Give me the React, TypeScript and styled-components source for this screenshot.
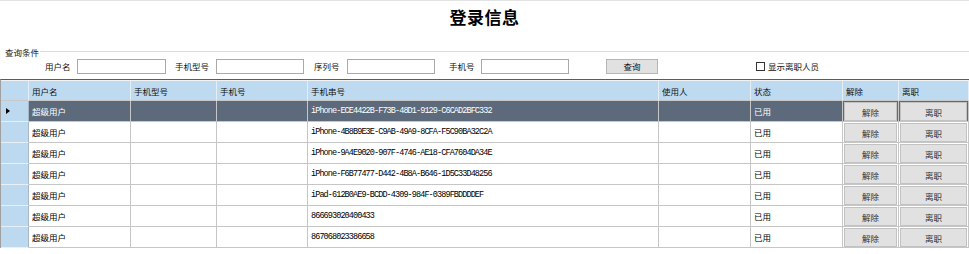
import React from "react";
import styled, { createGlobalStyle } from "styled-components";

const Global = createGlobalStyle`
  html, body { margin: 0; padding: 0; background: #fff; }
  body { font-family: "Noto Sans CJK SC", "Noto Sans", sans-serif; color: #000; }
  * { box-sizing: border-box; }
`;

const Page = styled.div`
  width: 969px;
  height: 254px;
  border-top: 1px solid #e2e2e2;
  overflow: hidden;
`;

const TitleBar = styled.div`
  height: 45px;
  display: flex;
  justify-content: center;
  padding-top: 5px;
`;

const Title = styled.h1`
  margin: 0;
  font-size: 17px;
  line-height: 22px;
  font-weight: 700;
  letter-spacing: 0.5px;
`;

const LegendRow = styled.div`
  height: 12px;
  display: flex;
  align-items: center;
  padding-left: 5px;
`;

const LegendText = styled.span`
  font-size: 8.5px;
  line-height: 12px;
  color: #222;
`;

const LegendLine = styled.div`
  flex: 1;
  height: 2px;
  border-top: 1px solid #dcdcdc;
  border-bottom: 1px solid #fff;
  margin-left: 1px;
`;

const FilterRow = styled.div`
  height: 16px;
  display: flex;
  align-items: center;
  padding-left: 45px;
`;

const Label = styled.span<{ $ml?: number; $w?: number }>`
  font-size: 8.5px;
  line-height: 12px;
  margin-left: ${(p) => p.$ml ?? 0}px;
  ${(p) => (p.$w ? `width: ${p.$w}px; flex: none;` : "")}
  white-space: nowrap;
  color: #111;
`;

const Input = styled.input<{ $w: number }>`
  width: ${(p) => p.$w}px;
  height: 15px;
  margin: 0;
  padding: 0;
  border: 1px solid #a9a9a9;
  background: #fff;
  outline: none;
  flex: none;
`;

const QueryButton = styled.button<{ $ml: number }>`
  width: 52px;
  height: 15px;
  margin-left: ${(p) => p.$ml}px;
  padding: 0;
  border: 1px solid #b5b5b5;
  background: #e1e1e1;
  font-family: inherit;
  font-size: 8.5px;
  line-height: 12px;
  color: #111;
  flex: none;
`;

const CheckBox = styled.span<{ $ml: number }>`
  width: 9px;
  height: 9px;
  margin-left: ${(p) => p.$ml}px;
  border: 1px solid #333;
  background: #fff;
  display: inline-block;
  flex: none;
`;

const TableWrap = styled.div`
  margin-top: 5px;
  border-top: 1px solid #5c5c5c;
  border-left: 1px solid #a0a0a0;
`;

const Grid = styled.table`
  width: 968px;
  border-collapse: separate;
  border-spacing: 0;
  table-layout: fixed;
  font-size: 8.5px;
`;

const HeadCell = styled.th`
  height: 21px;
  padding: 0 0 0 3px;
  text-align: left;
  vertical-align: middle;
  font-weight: 400;
  background: #bedaf0;
  border-top: 1px solid #f2f2f2;
  border-right: 1px solid #e6eef5;
  border-bottom: 1px solid #c8c8c8;
  color: #111;
  white-space: nowrap;
  overflow: hidden;
`;

const RowHeadCell = styled.td`
  height: 21px;
  background: #bdd9ef;
  border-bottom: 1px solid #e8f0f7;
  border-right: 1px solid #a7b9c8;
  padding: 0 0 0 5px;
  vertical-align: middle;
`;

const Pointer = styled.span`
  display: block;
  width: 0;
  height: 0;
  border-top: 3px solid transparent;
  border-bottom: 3px solid transparent;
  border-left: 4px solid #000;
`;

const Cell = styled.td<{ $sel: boolean; $mono?: boolean }>`
  height: 21px;
  padding: 0 0 0 3px;
  vertical-align: middle;
  border-right: 1px solid #c6c6c6;
  border-bottom: 1px solid #c6c6c6;
  background: ${(p) => (p.$sel ? "#5c6a7c" : "#fff")};
  color: ${(p) => (p.$sel ? "#fff" : "#000")};
  white-space: nowrap;
  overflow: hidden;
  font-family: ${(p) =>
    p.$mono ? '"Liberation Mono", monospace' : '"Noto Sans CJK SC", sans-serif'};
  font-size: ${(p) => (p.$mono ? "8.5px" : "8.5px")};
  letter-spacing: ${(p) => (p.$mono ? "-0.9px" : "0")};
`;

const ButtonCell = styled.td<{ $sel: boolean }>`
  height: 21px;
  padding: 1px 1px 0 1px;
  border-right: 1px solid #c6c6c6;
  border-bottom: 1px solid #c6c6c6;
  background: ${(p) => (p.$sel ? "#5c6a7c" : "#fff")};
`;

const CellButton = styled.button`
  display: block;
  width: 100%;
  height: 19px;
  margin: 0;
  padding: 0;
  border: 1px solid #c2c2c2;
  background: #e1e1e1;
  font-family: "Noto Sans CJK SC", sans-serif;
  font-size: 8.5px;
  color: #333;
`;

const columns = [
  { title: "", w: 28 },
  { title: "用户名", w: 102 },
  { title: "手机型号", w: 86 },
  { title: "手机号", w: 91 },
  { title: "手机串号", w: 351 },
  { title: "使用人", w: 92 },
  { title: "状态", w: 92 },
  { title: "解除", w: 56 },
  { title: "离职", w: 70 },
];

const serials = [
  "iPhone-ECE4422B-F73B-48D1-9129-C6CAD2BFC332",
  "iPhone-4B8B9E3E-C9AB-49A9-8CFA-F5C90BA32C2A",
  "iPhone-9A4E9020-907F-4746-AE18-CFA7604DA34E",
  "iPhone-F6B77477-D442-4B8A-B646-1D5C33D48256",
  "iPad-612B0AE9-BCDD-4309-984F-0389FBDDDDEF",
  "866693020400433",
  "867068023386658",
];

export default function App() {
  return (
    <>
      <Global />
      <Page>
        <TitleBar>
          <Title>登录信息</Title>
        </TitleBar>
        <LegendRow>
          <LegendText>查询条件</LegendText>
          <LegendLine />
        </LegendRow>
        <FilterRow>
          <Label $w={32}>用户名</Label>
          <Input $w={89} />
          <Label $ml={9} $w={41}>手机型号</Label>
          <Input $w={88} />
          <Label $ml={10} $w={33}>序列号</Label>
          <Input $w={88} />
          <Label $ml={14} $w={32}>手机号</Label>
          <Input $w={88} />
          <QueryButton $ml={37}>查询</QueryButton>
          <CheckBox $ml={98} />
          <Label $ml={3}>显示离职人员</Label>
        </FilterRow>
        <TableWrap>
          <Grid>
            <colgroup>
              {columns.map((c, i) => (
                <col key={i} style={{ width: c.w }} />
              ))}
            </colgroup>
            <thead>
              <tr>
                {columns.map((c, i) => (
                  <HeadCell key={i}>{c.title}</HeadCell>
                ))}
              </tr>
            </thead>
            <tbody>
              {serials.map((s, i) => {
                const sel = i === 0;
                return (
                  <tr key={i}>
                    <RowHeadCell>{sel ? <Pointer /> : null}</RowHeadCell>
                    <Cell $sel={sel}>超级用户</Cell>
                    <Cell $sel={sel} />
                    <Cell $sel={sel} />
                    <Cell $sel={sel} $mono>
                      {s}
                    </Cell>
                    <Cell $sel={sel} />
                    <Cell $sel={sel}>已用</Cell>
                    <ButtonCell $sel={sel}>
                      <CellButton>解除</CellButton>
                    </ButtonCell>
                    <ButtonCell $sel={sel}>
                      <CellButton>离职</CellButton>
                    </ButtonCell>
                  </tr>
                );
              })}
            </tbody>
          </Grid>
        </TableWrap>
      </Page>
    </>
  );
}
